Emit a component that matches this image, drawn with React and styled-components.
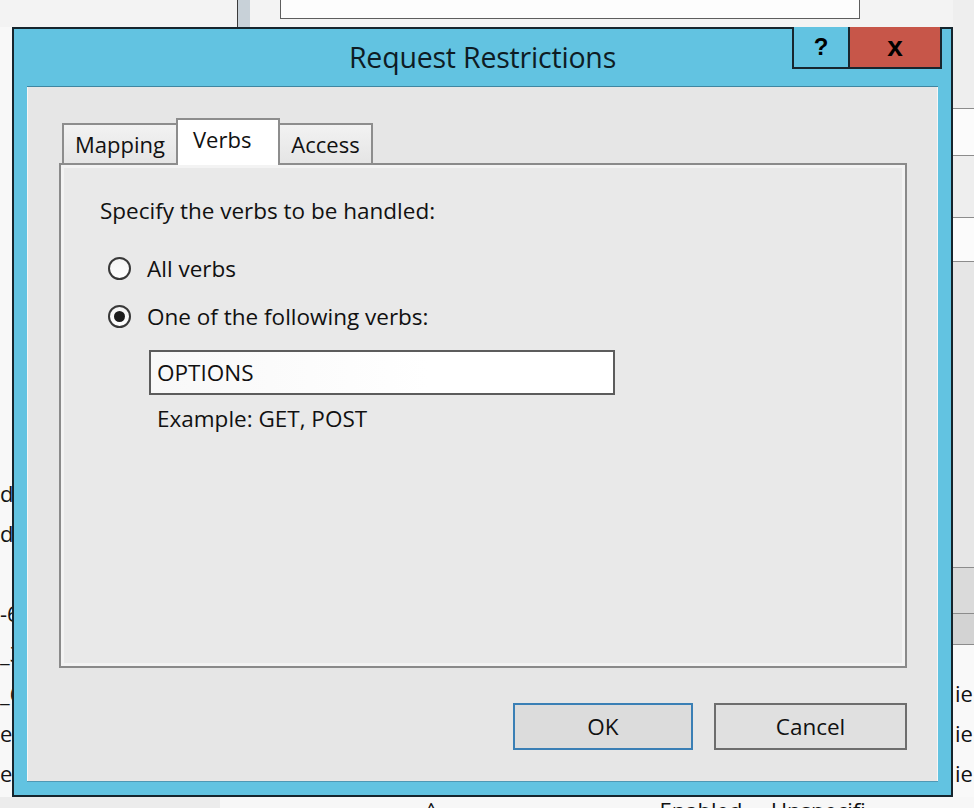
import React from "react";
import styled, { createGlobalStyle } from "styled-components";

const GlobalStyle = createGlobalStyle`
  html, body {
    margin: 0;
    padding: 0;
    background: #f2f2f2;
  }
  body {
    font-family: "Open Sans", "Noto Sans", sans-serif;
    color: #111111;
  }
`;

const Desktop = styled.div`
  position: relative;
  width: 974px;
  height: 808px;
  overflow: hidden;
  display: grid;
  grid-template-columns: 12px 1fr 21px;
  grid-template-rows: 27px 1fr 11px;
  background: #f2f2f2;
  font-size: 22.5px;
`;

const TopStrip = styled.div`
  grid-column: 1 / 3;
  grid-row: 1;
  display: flex;
  padding-left: 237px;
  background: #f3f3f3;
`;

const Splitter = styled.div`
  width: 12px;
  border-left: 1px solid #3a3a3a;
  background: #c8d1d8;
`;

const BackTextBox = styled.div`
  margin-left: 30px;
  width: 578px;
  height: 18px;
  background: #fdfdfd;
  border: 1px solid #5e5e5e;
  border-top: none;
`;

const LeftStrip = styled.div`
  grid-column: 1;
  grid-row: 2;
  display: flex;
  flex-direction: column;
  padding-top: 446px;
  background: #f8f8f8;
  overflow: hidden;
`;

const BackCell = styled.div`
  height: 40px;
  display: flex;
  align-items: center;
  white-space: nowrap;
  font-size: 22px;
  color: #151515;
`;

const RightStrip = styled.div`
  grid-column: 3;
  grid-row: 1 / 3;
  display: flex;
  flex-direction: column;
  overflow: hidden;
`;

const RightBlock = styled.div`
  flex: none;
  height: ${({ $h }) => $h}px;
  background: ${({ $bg }) => $bg};
  border-bottom: 1px solid #8c8c8c;
`;

const RightRows = styled.div`
  flex: 1;
  display: flex;
  flex-direction: column;
  background: #f9f9f9;
`;

const RightRow = styled.div`
  flex: none;
  height: 40px;
  margin-top: ${({ $mt }) => $mt || 0}px;
  display: flex;
  align-items: center;
  padding-left: 2px;
  white-space: nowrap;
  font-size: 22px;
`;

const BottomStrip = styled.div`
  grid-column: 1 / 4;
  grid-row: 3;
  display: flex;
  align-items: flex-start;
  background: #f7f7f7;
  overflow: hidden;
`;

const BottomBox = styled.div`
  width: 220px;
  height: 11px;
  background: #ececec;
`;

const BottomText = styled.span`
  margin-left: ${({ $ml }) => $ml}px;
  margin-top: 1px;
  font-size: 22px;
  line-height: 24px;
  white-space: nowrap;
`;

/* dialog window floats over the console behind it */
const Window = styled.div`
  position: absolute;
  left: 12px;
  top: 27px;
  width: 941px;
  height: 770px;
  box-sizing: border-box;
  border: 2px solid #16252d;
  background: #62c3e1;
  display: flex;
  flex-direction: column;
  padding: 0 13px 13px 13px;
`;

const TitleBar = styled.div`
  height: 58px;
  margin: 0 -13px;
  display: grid;
  grid-template-columns: 1fr auto 1fr;
  align-items: center;
`;

const Title = styled.div`
  grid-column: 2;
  font-size: 28.5px;
  color: #0e1c24;
  letter-spacing: -0.2px;
  margin-top: -2px;
`;

const CaptionButtons = styled.div`
  grid-column: 3;
  justify-self: end;
  align-self: start;
  margin-top: -2px;
  margin-right: 9px;
  display: flex;
  border: 2px solid #17262e;
  border-top: none;
`;

const CaptionButton = styled.div`
  width: ${({ $w }) => $w}px;
  height: 40px;
  display: flex;
  align-items: center;
  justify-content: center;
  background: ${({ $bg }) => $bg};
  border-left: ${({ $sep }) => ($sep ? "2px solid #17262e" : "none")};
  font-family: "Liberation Sans", Arial, sans-serif;
  font-weight: 700;
  font-size: ${({ $fs }) => $fs}px;
  color: #000;
`;

const Client = styled.div`
  flex: 1;
  display: flex;
  flex-direction: column;
  background: #e6e6e6;
  border-top: 1px solid #3f86a1;
  border-bottom: 1px solid #4f98b4;
  box-shadow: inset 1px 0 0 #f6f6f6, inset -1px 0 0 #f6f6f6;
  padding: 31px 31px 31px 32px;
`;

const TabStrip = styled.div`
  display: flex;
  align-items: flex-end;
  height: 47px;
  padding-left: 3px;
  margin-bottom: -2px;
  position: relative;
  z-index: 1;
`;

const Tab = styled.div`
  box-sizing: border-box;
  width: ${({ $w }) => $w}px;
  height: ${({ $active }) => ($active ? 47 : 42)}px;
  padding: ${({ $active }) => ($active ? "0 0 8px 15px" : "0")};
  margin-left: -2px;
  display: flex;
  align-items: center;
  justify-content: ${({ $active }) => ($active ? "flex-start" : "center")};
  border: 2px solid #8d8d8d;
  border-bottom: ${({ $active }) => ($active ? "none" : "2px solid #8d8d8d")};
  background: ${({ $active }) =>
    $active ? "#ffffff" : "linear-gradient(#f2f2f2, #e5e5e5)"};
  font-size: 22px;
  color: #111;
  &:first-child {
    margin-left: 0;
  }
`;

const Panel = styled.div`
  height: 505px;
  box-sizing: border-box;
  border: 2px solid #8a8a8a;
  background: #e9e9e9;
  box-shadow: inset 0 0 0 3px #f3f3f3;
  padding: 31px 39px;
  display: flex;
  flex-direction: column;
  align-items: flex-start;
`;

const Label = styled.div`
  line-height: 30px;
  margin-left: ${({ $ml }) => $ml || 0}px;
  margin-top: ${({ $mt }) => $mt || 0}px;
`;

const RadioRow = styled.div`
  display: flex;
  align-items: center;
  height: 30px;
  margin-top: ${({ $mt }) => $mt}px;
  padding-left: 8px;
  gap: 16px;
`;

const RadioCircle = styled.span`
  flex: none;
  width: 23px;
  height: 23px;
  box-sizing: border-box;
  border-radius: 50%;
  border: 2px solid #383838;
  background: linear-gradient(#f4f4f4, #ffffff);
  display: flex;
  align-items: center;
  justify-content: center;
  &::after {
    content: "";
    width: 11px;
    height: 11px;
    border-radius: 50%;
    background: #1c1c1c;
    display: ${({ $checked }) => ($checked ? "block" : "none")};
  }
`;

const TextBox = styled.div`
  width: 466px;
  height: 45px;
  box-sizing: border-box;
  margin-top: 19px;
  margin-left: 49px;
  border: 2px solid #5c5c5c;
  background: linear-gradient(90deg, #f8f8f8, #ffffff 60%);
  display: flex;
  align-items: center;
  padding-left: 6px;
`;

const ButtonRow = styled.div`
  margin-top: 35px;
  display: flex;
  justify-content: flex-end;
  gap: 21px;
`;

const DialogButton = styled.div`
  width: ${({ $w }) => $w}px;
  height: 47px;
  box-sizing: border-box;
  border: 2px solid ${({ $default }) => ($default ? "#3a7fb5" : "#6d6d6d")};
  background: ${({ $default }) => ($default ? "#dcdcdc" : "#e0e0e0")};
  display: flex;
  align-items: center;
  justify-content: center;
  color: #111;
`;

const leftTexts = ["d", "d-", "", "-6", "_3", "_6", "ec", "ec"];

export default function App() {
  return (
    <>
      <GlobalStyle />
      <Desktop>
        <TopStrip>
          <Splitter />
          <BackTextBox />
        </TopStrip>
        <LeftStrip>
          {leftTexts.map((t, i) => (
            <BackCell key={i}>{t}</BackCell>
          ))}
        </LeftStrip>
        <RightStrip>
          <RightBlock $h={108} $bg="#eeeeee" />
          <RightBlock $h={46} $bg="#fbfbfb" />
          <RightBlock $h={61} $bg="#eeeeee" />
          <RightBlock $h={43} $bg="#fbfbfb" />
          <RightBlock $h={305} $bg="#e6e6e6" />
          <RightBlock $h={45} $bg="#dadada" />
          <RightBlock $h={30} $bg="#d3d3d3" />
          <RightRows>
            <RightRow $mt={28}>ie</RightRow>
            <RightRow>ie</RightRow>
            <RightRow>ie</RightRow>
          </RightRows>
        </RightStrip>
        <BottomStrip>
          <BottomBox />
          <BottomText $ml={205}>^</BottomText>
          <BottomText $ml={222}>Enabled&nbsp;&nbsp;&nbsp;&nbsp;&nbsp;Unspecifi</BottomText>
        </BottomStrip>

        <Window>
          <TitleBar>
            <Title>Request Restrictions</Title>
            <CaptionButtons>
              <CaptionButton $w={54} $bg="#62c3e1" $fs={24}>?</CaptionButton>
              <CaptionButton $w={90} $bg="#c75649" $fs={28} $sep>
                x
              </CaptionButton>
            </CaptionButtons>
          </TitleBar>
          <Client>
            <TabStrip>
              <Tab $w={116}>Mapping</Tab>
              <Tab $w={104} $active>
                Verbs
              </Tab>
              <Tab $w={95}>Access</Tab>
            </TabStrip>
            <Panel>
              <Label>Specify the verbs to be handled:</Label>
              <RadioRow $mt={27}>
                <RadioCircle />
                All verbs
              </RadioRow>
              <RadioRow $mt={18}>
                <RadioCircle $checked />
                One of the following verbs:
              </RadioRow>
              <TextBox>OPTIONS</TextBox>
              <Label $ml={57} $mt={9}>
                Example: GET, POST
              </Label>
            </Panel>
            <ButtonRow>
              <DialogButton $w={180} $default>
                OK
              </DialogButton>
              <DialogButton $w={193}>Cancel</DialogButton>
            </ButtonRow>
          </Client>
        </Window>
      </Desktop>
    </>
  );
}
